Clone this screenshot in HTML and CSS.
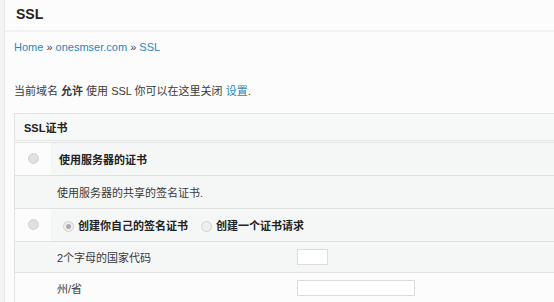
FILE: index.html
```html
<!DOCTYPE html>
<html lang="zh">
<head>
  <meta charset="UTF-8">
  <title>SSL</title>
  <link rel="stylesheet" href="styles.css">
</head>
<body>
<div class="page">
  <h2 class="title">SSL</h2>

  <div class="crumbs">
    <a href="#">Home</a> » <a href="#">onesmser.com</a> » <a href="#">SSL</a>
  </div>

  <p class="notice">当前域名 <b>允许</b> 使用 SSL 你可以在这里关闭 <a href="#">设置</a>.</p>

  <table class="box">
    <tr class="head">
      <th colspan="3">SSL证书</th>
    </tr>
    <tr class="opt">
      <td class="pick"><span class="radio"></span></td>
      <td colspan="2"><b>使用服务器的证书</b></td>
    </tr>
    <tr class="sub">
      <td class="pick"></td>
      <td colspan="2">使用服务器的共享的签名证书.</td>
    </tr>
    <tr class="opt">
      <td class="pick"><span class="radio"></span></td>
      <td colspan="2">
        <span class="choice"><span class="radio small on"></span><b>创建你自己的签名证书</b></span>
        <span class="choice"><span class="radio small"></span><b>创建一个证书请求</b></span>
      </td>
    </tr>
    <tr class="sub field">
      <td class="pick"></td>
      <td class="name">2个字母的国家代码</td>
      <td><input type="text" class="short"></td>
    </tr>
    <tr class="sub field light">
      <td class="pick"></td>
      <td class="name">州/省</td>
      <td><input type="text" class="long"></td>
    </tr>
  </table>
</div>
</body>
</html>
```

FILE: styles.css
```css
body {
  margin: 0;
  background: #f3f3f3;
  font-family: "Liberation Sans", "Noto Sans CJK SC", sans-serif;
  font-size: 11px;
  color: #3a3a3a;
  overflow: hidden;
}

.page {
  margin-left: 4px;
  background: #fcfcfc;
  border-left: 1px solid #e8e8e8;
  min-height: 302px;
}

.title {
  margin: 0;
  height: 30px;
  padding-left: 11px;
  line-height: 28px;
  font-size: 14px;
  font-weight: bold;
  color: #222;
  border-bottom: 2px solid #f1f1f1;
}

a {
  color: #2a86c0;
  text-decoration: none;
}

.crumbs {
  padding: 7px 0 0 9px;
  height: 22px;
  line-height: 16px;
}

.notice {
  margin: 0;
  padding: 22px 0 0 9px;
  height: 30px;
  line-height: 16px;
}

.box {
  margin-left: 9px;
  width: 560px;
  border-collapse: collapse;
  border: 1px solid #e2e2e2;
  border-right: none;
  background: #f5f6f6;
}

.box th {
  text-align: left;
  height: 26px;
  padding: 0 0 0 9px;
  font-size: 11px;
  color: #222;
  background: #f7f8f8;
  border-bottom: 3px double #e4e6e6;
}

.box td {
  padding: 0;
  height: 32px;
  border-top: 1px solid #e0e2e2;
}

.box .field td {
  height: 30px;
}

.box .pick {
  width: 36px;
  text-align: center;
}

.opt .pick {
  background: #fcfcfc;
}

.opt td + td {
  padding-left: 8px;
  color: #222;
}

.sub td + td {
  padding-left: 6px;
}

.box .name {
  width: 234px;
}

.light td {
  background: #fcfcfc;
}

.radio {
  display: inline-block;
  width: 9px;
  height: 9px;
  border-radius: 50%;
  background: #e0e0e0;
  border: 1px solid #d2d2d2;
  vertical-align: middle;
  position: relative;
  top: -1px;
}

.radio.small {
  margin: 0 4px;
  background: #eee;
}

.radio.on::after {
  content: "";
  position: absolute;
  left: 2px;
  top: 2px;
  width: 5px;
  height: 5px;
  border-radius: 50%;
  background: #aaa;
}

.choice {
  margin-right: 6px;
}

.box input {
  height: 14px;
  padding: 0;
  border: 1px solid #ddd;
  background: #fff;
  vertical-align: middle;
}

.short {
  width: 29px;
}

.long {
  width: 116px;
}
```
